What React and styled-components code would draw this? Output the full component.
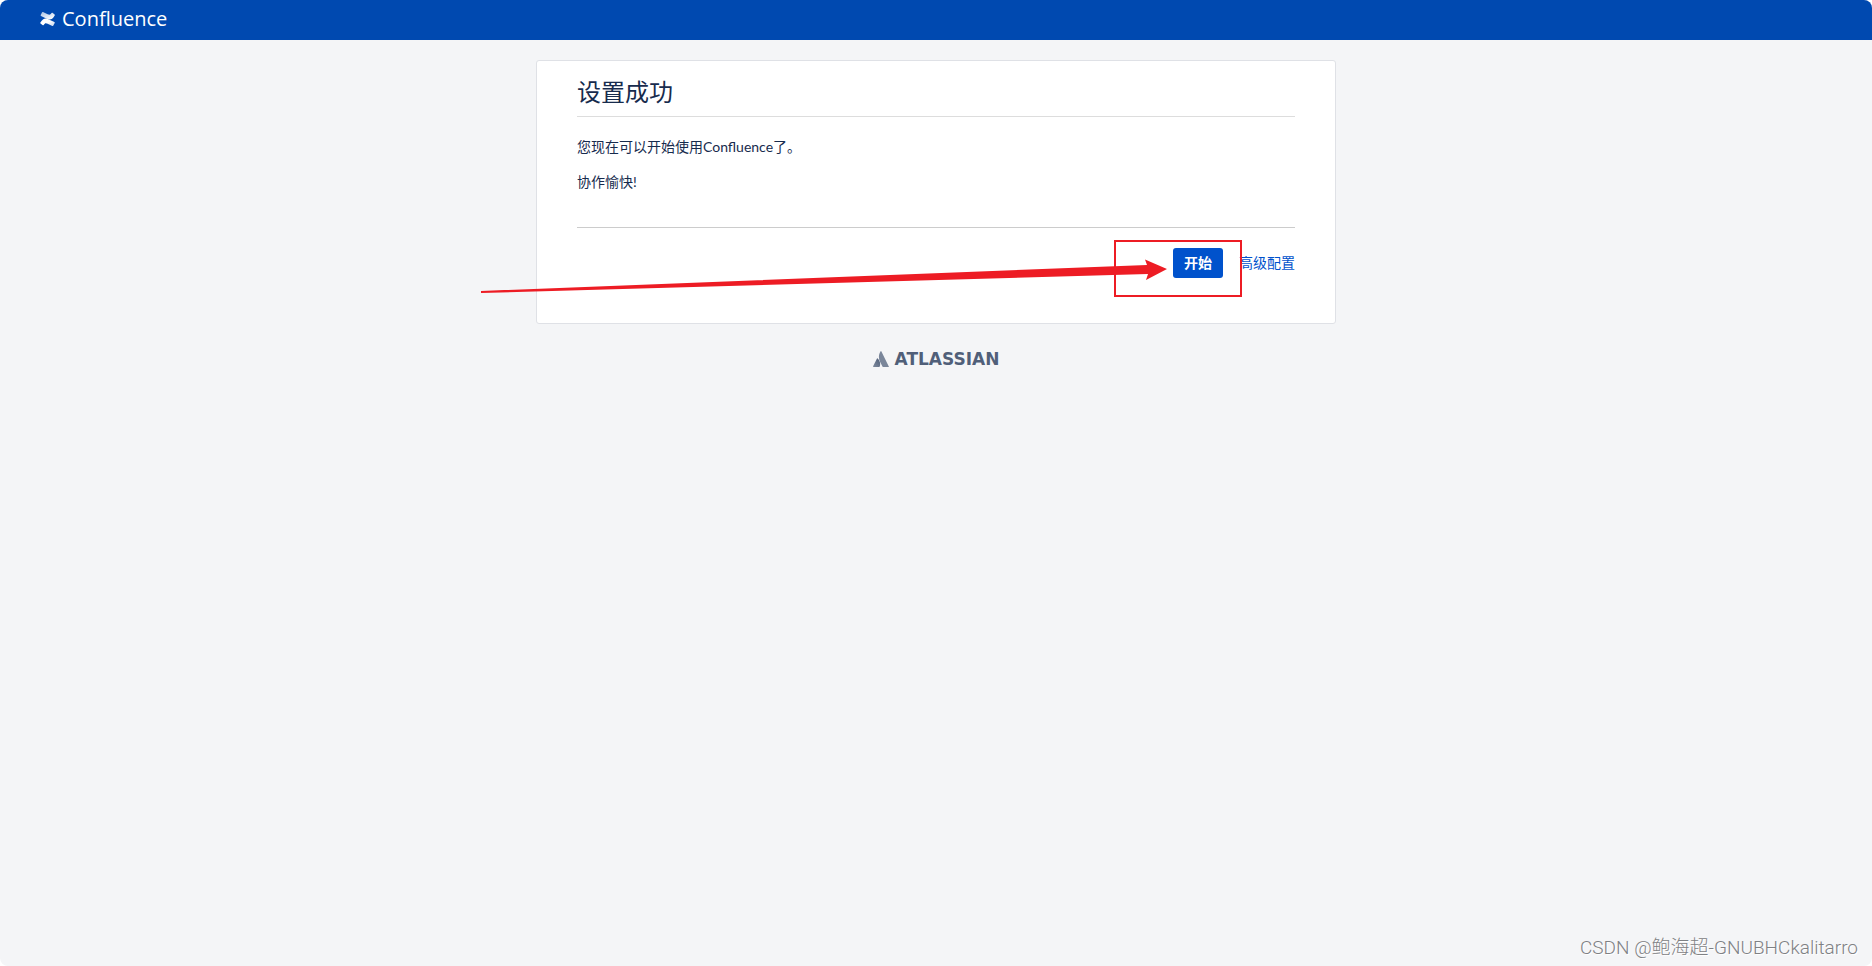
import React from "react";
import styled, { createGlobalStyle } from "styled-components";

const GlobalStyle = createGlobalStyle`
  *, *::before, *::after { box-sizing: border-box; }
  body {
    margin: 0;
    background: #ffffff;
    color: #172b4d;
    font-family: Lato, "Noto Sans CJK SC", sans-serif;
    font-size: 14px;
    line-height: 20px;
  }
`;

const Page = styled.div`
  position: relative;
  display: flex;
  flex-direction: column;
  min-height: 100vh;
  overflow: hidden;
  background: #f4f5f7;
  border-radius: 8px;
`;

const Header = styled.header`
  display: flex;
  align-items: center;
  height: 40px;
  padding: 0 40px;
  background: #0049b0;
`;

const Brand = styled.a`
  display: flex;
  align-items: center;
  gap: 6px;
  color: #ffffff;
  font-family: "Open Sans", sans-serif;
  font-size: 20px;
  line-height: 24px;
  padding-bottom: 2px;
  text-decoration: none;
`;

const Main = styled.main`
  position: relative;
  width: 100%;
  max-width: 800px;
  margin: 20px auto 0;
  padding: 12px 40px 45px;
  background: #ffffff;
  border: 1px solid #dfe1e6;
  border-radius: 3px;
`;

const Title = styled.h1`
  margin: 0;
  padding: 3px 0 9px;
  border-bottom: 1px solid #dddddd;
  font-size: 24px;
  font-weight: 400;
  line-height: 31px;
`;

const Message = styled.div`
  padding: 20px 0 35px;
  border-bottom: 1px solid #cccccc;
`;

const Paragraph = styled.p`
  margin: 0;
  & + & { margin-top: 15px; }
`;

const Actions = styled.div`
  display: flex;
  justify-content: flex-end;
  align-items: center;
  gap: 16px;
  padding-top: 20px;
`;

const PrimaryButton = styled.button`
  height: 30px;
  padding: 0 11px;
  border: 0;
  border-radius: 3px;
  background: #0052cc;
  color: #ffffff;
  font: inherit;
  font-weight: 700;
  cursor: pointer;
`;

const TextLink = styled.a`
  color: #0052cc;
  text-decoration: none;
`;

const Annotation = styled.svg`
  position: absolute;
  top: -1px;
  left: -1px;
  overflow: visible;
  pointer-events: none;
`;

const Footer = styled.footer`
  display: flex;
  justify-content: center;
  padding-top: 23px;
`;

const Company = styled.a`
  display: flex;
  align-items: center;
  gap: 6px;
  color: #505f79;
  font-family: "DejaVu Sans", sans-serif;
  font-size: 17px;
  font-weight: 700;
  line-height: 24px;
  text-decoration: none;
`;

const Watermark = styled.div`
  position: absolute;
  right: 14px;
  bottom: 5px;
  color: #7f8184;
  font-family: Roboto, "Noto Sans CJK SC", sans-serif;
  font-size: 19px;
  font-weight: 300;
  line-height: 26px;
  text-shadow: 1px 1px 0 #ffffff;
`;

function ConfluenceMark() {
  return (
    <svg width="16" height="16" viewBox="0 0 16 16" aria-hidden="true">
      <defs>
        <linearGradient id="lower" x1="1" y1="1" x2="0" y2="0">
          <stop offset="0" stopColor="#ffffff" stopOpacity="0.75" />
          <stop offset="0.5" stopColor="#ffffff" />
          <stop offset="1" stopColor="#ffffff" />
        </linearGradient>
        <linearGradient id="upper" x1="0" y1="0" x2="0.7" y2="1">
          <stop offset="0" stopColor="#ffffff" stopOpacity="0.65" />
          <stop offset="1" stopColor="#ffffff" />
        </linearGradient>
      </defs>
      <path fill="url(#lower)" d="M0.4 11.5 C3.5 6.4 5.8 7 9.4 8.7 L14.4 11.1 Q15 11.4 14.7 12 L13.2 14.8 Q12.9 15.3 12.3 15 L7.6 12.8 C5.8 12 5 12 3.7 14 Q3.4 14.6 2.8 14.2 L0.5 12.6 Q0 12.2 0.4 11.5Z" />
      <path fill="url(#upper)" d="M14.7 4.5 C11.6 9.6 9.3 9 5.7 7.3 L1 5 Q0.4 4.7 0.7 4 L2.1 1.2 Q2.4 0.7 3 1 L7.6 3.2 C9.5 4 10.2 4 11.5 2 Q11.9 1.4 12.5 1.8 L14.6 3.4 Q15.1 3.8 14.7 4.5Z" />
    </svg>
  );
}

function AtlassianMark() {
  return (
    <svg width="16" height="16" viewBox="0 0 16 16" aria-hidden="true">
      <defs>
        <linearGradient id="slope" x1="1" y1="0" x2="0.2" y2="1">
          <stop offset="0" stopColor="#505f79" />
          <stop offset="1" stopColor="#7a869a" />
        </linearGradient>
      </defs>
      <path fill="url(#slope)" d="M4.7 7.4 Q4.3 7 4 7.5 L0.1 15.3 Q-0.1 16 0.6 16 H6.1 Q6.4 16 6.6 15.7 C7.8 13.2 7.1 9.6 4.7 7.4Z" />
      <path fill="#7a869a" d="M7.6 0.3 C5.4 3.8 5.5 7.7 7 10.7 L9.6 15.7 Q9.8 16 10.2 16 H15.5 Q16.1 16 15.8 15.4 L8.3 0.3 Q8 -0.2 7.6 0.3Z" />
    </svg>
  );
}

export default function App() {
  return (
    <>
      <GlobalStyle />
      <Page>
        <Header>
          <Brand href="#">
            <ConfluenceMark />
            Confluence
          </Brand>
        </Header>
        <Main>
          <Title>设置成功</Title>
          <Message>
            <Paragraph>您现在可以开始使用Confluence了。</Paragraph>
            <Paragraph>协作愉快!</Paragraph>
          </Message>
          <Actions>
            <PrimaryButton type="button">开始</PrimaryButton>
            <TextLink href="#">高级配置</TextLink>
          </Actions>
          <Annotation width="800" height="264" viewBox="0 0 800 264" aria-hidden="true">
            <rect x="579" y="181" width="126" height="55" fill="none" stroke="#ed1c24" strokeWidth="2" />
            <path fill="#ed1c24" d="M-55 231 L611 205 L609 199.5 L631 209 L610 220 L612 214 L-55 233Z" />
          </Annotation>
        </Main>
        <Footer>
          <Company href="#">
            <AtlassianMark />
            ATLASSIAN
          </Company>
        </Footer>
        <Watermark>CSDN @鲍海超-GNUBHCkalitarro</Watermark>
      </Page>
    </>
  );
}
